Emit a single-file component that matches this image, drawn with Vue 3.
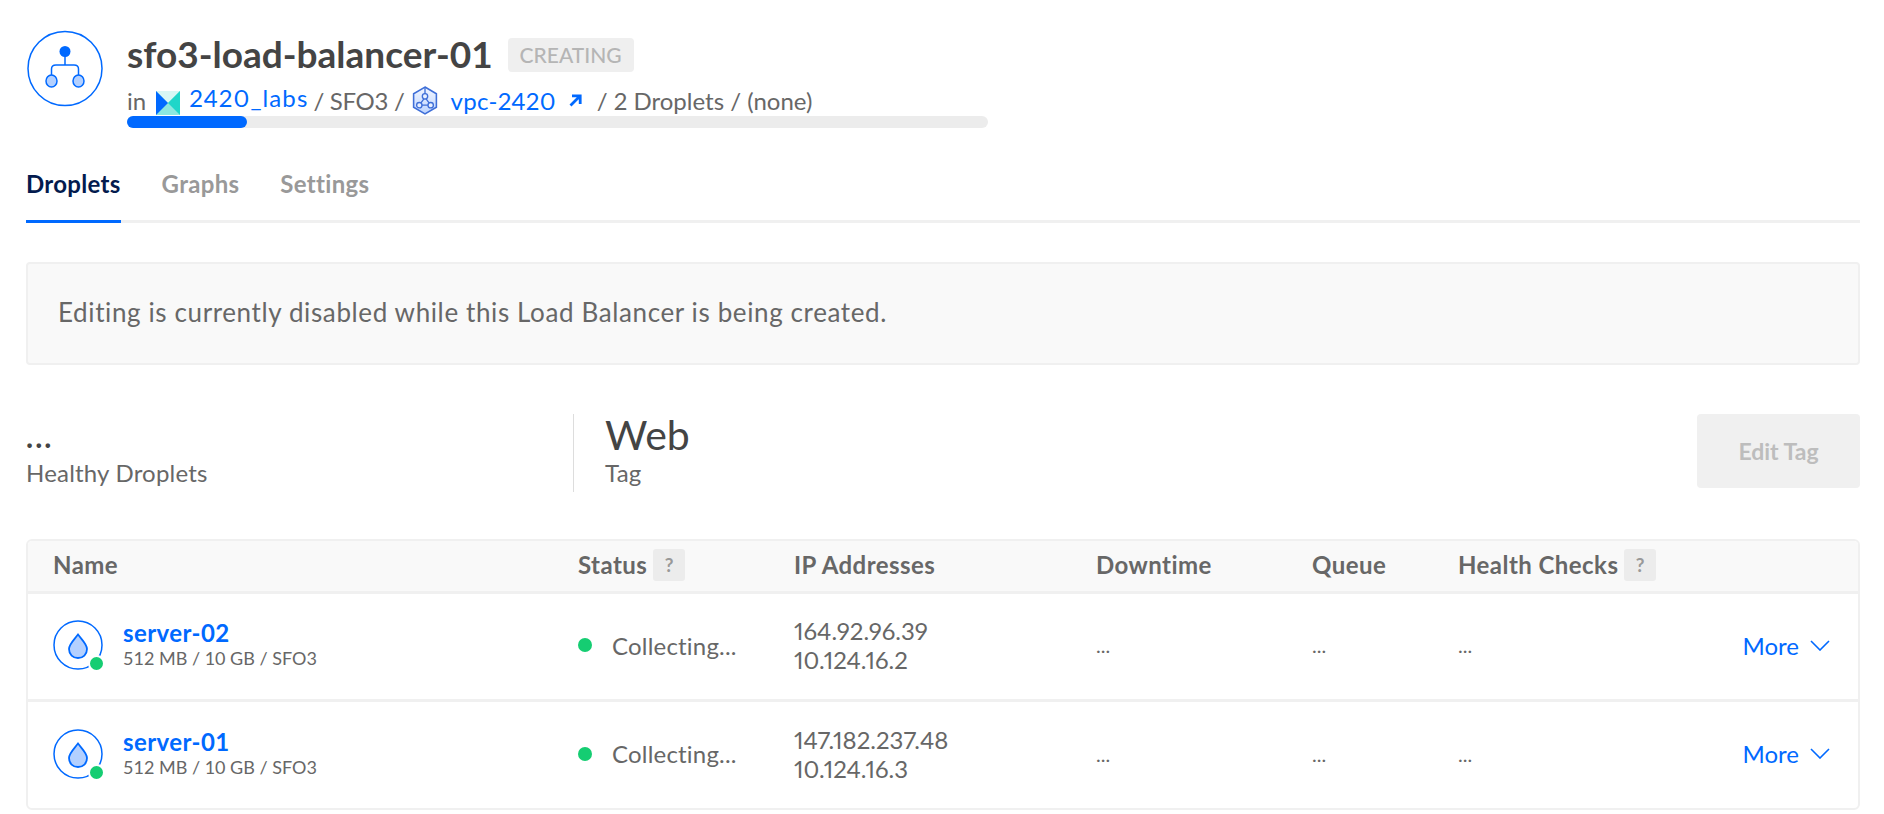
<script setup>
const droplets = [
  { name: 'server-02', ip: '164.92.96.39', priv: '10.124.16.2' },
  { name: 'server-01', ip: '147.182.237.48', priv: '10.124.16.3' }
]
</script>

<template>
  <div class="page">
    <header class="head">
      <svg class="lb-icon" width="78" height="78" viewBox="0 0 78 78" fill="none">
        <circle cx="39" cy="38.500" r="37" stroke="#0069ff" stroke-width="1.500" />
        <path d="M39 25V35M39 35H30C27 35 25.500 36.500 25.500 39V46M39 35H48C51 35 52.500 36.500 52.500 39V46" stroke="#0069ff" stroke-width="1.500" />
        <circle cx="39" cy="21.500" r="5.500" fill="#0069ff" />
        <ellipse cx="25.500" cy="51" rx="5.500" ry="6" fill="#b3d0ff" stroke="#0069ff" stroke-width="1.500" />
        <ellipse cx="52.500" cy="51" rx="5.500" ry="6" fill="#b3d0ff" stroke="#0069ff" stroke-width="1.500" />
      </svg>
      <div class="head-main">
        <div class="title-row">
          <h1 class="title">sfo3-load-balancer-01</h1>
          <span class="badge">CREATING</span>
        </div>
        <div class="meta">
          <span>in</span>
          <svg class="team" width="24" height="24" viewBox="0 0 23 23">
            <rect width="23" height="23" fill="#8ce8e0" />
            <path d="M0 0H23L11.500 11.500Z" fill="#d8f7f4" />
            <path d="M0 0L11.500 11.500L0 23Z" fill="#0069ff" />
            <path d="M23 0L11.500 11.500L23 23Z" fill="#1fd6c9" />
          </svg>
          <a class="link team-link">2420_labs</a>
          <span class="sep">/ SFO3 /</span>
          <svg class="vpc" width="26" height="29" viewBox="0 0 24 28" fill="none">
            <defs>
              <linearGradient id="vpcFill" x1="0" y1="0" x2="0" y2="1">
                <stop offset="0" stop-color="#f2f6ff" />
                <stop offset="1" stop-color="#bcd4ff" />
              </linearGradient>
            </defs>
            <path d="M12 1L23 7.500V20.500L12 27L1 20.500V7.500Z" fill="url(#vpcFill)" stroke="#3f6fd8" stroke-width="1.500" />
            <path d="M12 1V8M12 11L6.500 18.500M12 11L17.500 18.500M6.500 18.500H17.500" stroke="#3f6fd8" stroke-width="1.300" />
            <circle cx="12" cy="10" r="2.600" fill="#e8f0ff" stroke="#3f6fd8" stroke-width="1.300" />
            <circle cx="6.500" cy="18.500" r="2.600" fill="#e8f0ff" stroke="#3f6fd8" stroke-width="1.300" />
            <circle cx="17.500" cy="18.500" r="2.600" fill="#e8f0ff" stroke="#3f6fd8" stroke-width="1.300" />
          </svg>
          <a class="link vpc-link">vpc-2420</a>
          <svg class="arrow" width="13" height="13" viewBox="0 0 13 13" fill="none">
            <path d="M1.500 11.500L10 3M3 1.800H11.200V10" stroke="#0069ff" stroke-width="2.800" />
          </svg>
          <span>/ 2 Droplets / (none)</span>
        </div>
        <div class="progress"><div class="progress-fill"></div></div>
      </div>
    </header>

    <nav class="tabs">
      <a class="tab active">Droplets</a>
      <a class="tab">Graphs</a>
      <a class="tab">Settings</a>
    </nav>

    <div class="notice">Editing is currently disabled while this Load Balancer is being created.</div>

    <section class="summary">
      <div class="healthy">
        <div class="dots">...</div>
        <div class="stat-label">Healthy Droplets</div>
      </div>
      <div class="tag">
        <div class="tag-name">Web</div>
        <div class="stat-label">Tag</div>
      </div>
      <button class="edit-btn">Edit Tag</button>
    </section>

    <section class="table">
      <div class="row head-row">
        <div>Name</div>
        <div class="with-help">Status <span class="help">?</span></div>
        <div>IP Addresses</div>
        <div>Downtime</div>
        <div>Queue</div>
        <div class="with-help">Health Checks <span class="help">?</span></div>
        <div></div>
      </div>
      <div v-for="d in droplets" :key="d.name" class="row body-row">
        <div class="name-cell">
          <div class="drop-wrap">
            <svg width="50" height="50" viewBox="0 0 50 50" fill="none">
              <circle cx="25" cy="25" r="24" stroke="#0069ff" stroke-width="1.500" />
              <path d="M25 14.500C21 20 16 24 16 29C16 34.500 20 38 25 38C30 38 34 34.500 34 29C34 24 29 20 25 14.500Z" fill="#b3d0ff" stroke="#0069ff" stroke-width="1.800" />
            </svg>
            <span class="online"></span>
          </div>
          <div>
            <a class="server">{{ d.name }}</a>
            <div class="spec">512 MB / 10 GB / SFO3</div>
          </div>
        </div>
        <div class="status"><span class="status-dot"></span>Collecting...</div>
        <div class="ips">{{ d.ip }}<br />{{ d.priv }}</div>
        <div class="muted">...</div>
        <div class="muted">...</div>
        <div class="muted">...</div>
        <a class="more">More
          <svg width="20" height="11" viewBox="0 0 20 11" fill="none">
            <path d="M1 1L10 10L19 1" stroke="#0069ff" stroke-width="1.600" />
          </svg>
        </a>
      </div>
    </section>
  </div>
</template>

<style>
html, body {
  background: #fff;
}
</style>

<style scoped>
.page {
  width: 1834px;
  margin-left: 26px;
  font-family: "Lato", "Liberation Sans", sans-serif;
  color: #676767;
}
.head {
  display: flex;
  padding-top: 30px;
  height: 99px;
  gap: 23px;
}
.lb-icon {
  flex: none;
  display: block;
}
.head-main {
  width: 861px;
}
.title-row {
  display: flex;
  align-items: center;
  gap: 15px;
  height: 44px;
  margin-top: 2px;
}
.title {
  margin: 0;
  font-size: 37px;
  font-weight: 700;
  color: #444;
  line-height: 44px;
}
.badge {
  background: #efefef;
  color: #b5b5b5;
  font-size: 21px;
  font-weight: 500;
  padding: 0 12px;
  height: 34px;
  line-height: 34px;
  border-radius: 4px;
  margin-top: 1px;
}
.meta {
  display: flex;
  align-items: center;
  height: 30px;
  margin-top: 9px;
  font-size: 24px;
  white-space: nowrap;
  font-variant-numeric: proportional-nums;
}
.team {
  margin-left: 10px;
  margin-top: 6px;
}
.link {
  color: #0069ff;
}
.team-link {
  margin-left: 9px;
  margin-top: -5px;
  letter-spacing: 1.1px;
}
.sep {
  margin-left: 5px;
  letter-spacing: -0.3px;
}
.vpc {
  margin-left: 8px;
}
.vpc-link {
  margin-left: 12px;
  letter-spacing: 0.3px;
}
.arrow {
  margin-left: 13px;
  margin-right: 15px;
}
.progress {
  height: 12px;
  border-radius: 6px;
  background: #ececec;
  margin-top: 1px;
}
.progress-fill {
  width: 120px;
  height: 12px;
  border-radius: 6px;
  background: #0069ff;
}
.tabs {
  display: flex;
  gap: 41px;
  height: 94px;
  border-bottom: 3px solid #f0f0f0;
  box-sizing: border-box;
  padding-top: 38px;
}
.tab {
  font-size: 24px;
  font-weight: 700;
  letter-spacing: 0.3px;
  color: #999;
  height: 56px;
  box-sizing: border-box;
  line-height: 33px;
}
.tab.active {
  color: #031b4e;
  border-bottom: 3px solid #0069ff;
}
.notice {
  margin-top: 39px;
  height: 103px;
  box-sizing: border-box;
  padding-left: 30px;
  line-height: 97px;
  font-size: 26px;
  letter-spacing: 0.62px;
  background: #f9f9f9;
  border: 2px solid #f0f0f0;
  border-radius: 4px;
}
.summary {
  display: flex;
  align-items: center;
  margin-top: 49px;
  height: 78px;
}
.healthy {
  width: 547px;
}
.dots {
  font-size: 30px;
  font-weight: 700;
  letter-spacing: 2px;
  line-height: 36px;
  color: #444;
}
.stat-label {
  font-size: 24px;
  letter-spacing: 0.2px;
  line-height: 30px;
  margin-top: 4px;
}
.tag {
  flex: 1;
  height: 78px;
  border-left: 1px solid #ddd;
  padding-left: 31px;
}
.tag-name {
  font-size: 41px;
  line-height: 42px;
  color: #444;
}
.tag .stat-label {
  margin-top: 2px;
}
.edit-btn {
  align-self: flex-start;
  width: 163px;
  height: 74px;
  border: none;
  border-radius: 4px;
  background: #f0f0f0;
  color: #bdbdbd;
  font: 700 23px "Lato", sans-serif;
}
.table {
  margin-top: 47px;
  border: 2px solid #f0f0f0;
  border-radius: 6px;
  overflow: hidden;
}
.row {
  display: grid;
  grid-template-columns: 525px 216px 302px 216px 146px 1fr auto;
  align-items: center;
  padding: 0 28px 0 25px;
}
.head-row {
  height: 50px;
  padding-bottom: 3px;
  box-sizing: border-box;
  background: #f9f9f9;
  font-size: 24px;
  letter-spacing: 0.45px;
  font-weight: 700;
  color: #676767;
}
.with-help {
  display: flex;
  align-items: center;
  gap: 6px;
}
.help {
  width: 32px;
  height: 32px;
  border-radius: 3px;
  background: #ececec;
  color: #999;
  font-size: 19px;
  line-height: 32px;
  text-align: center;
}
.body-row {
  height: 108px;
  padding-bottom: 3px;
  border-top: 3px solid #f0f0f0;
  box-sizing: border-box;
}
.body-row:last-child {
  height: 109px;
}
.name-cell {
  display: flex;
  align-items: center;
  gap: 20px;
}
.drop-wrap {
  position: relative;
  width: 50px;
  height: 50px;
}
.drop-wrap svg {
  display: block;
}
.online {
  position: absolute;
  right: -2px;
  bottom: -2px;
  width: 13px;
  height: 13px;
  border-radius: 50%;
  background: #15cd72;
  border: 2px solid #fff;
}
.server {
  display: block;
  font-size: 24px;
  letter-spacing: 0.4px;
  font-weight: 700;
  color: #0069ff;
  line-height: 26px;
}
.spec {
  font-size: 18px;
  line-height: 24px;
}
.status {
  display: flex;
  align-items: center;
  font-size: 24px;
  letter-spacing: 0.2px;
}
.status-dot {
  width: 14px;
  height: 14px;
  border-radius: 50%;
  background: #15cd72;
  margin-right: 20px;
}
.ips {
  font-size: 24px;
  line-height: 29px;
  font-variant-numeric: proportional-nums;
}
.muted {
  font-size: 20px;
}
.more {
  display: flex;
  align-items: center;
  gap: 11px;
  font-size: 24px;
  color: #0069ff;
}
</style>
